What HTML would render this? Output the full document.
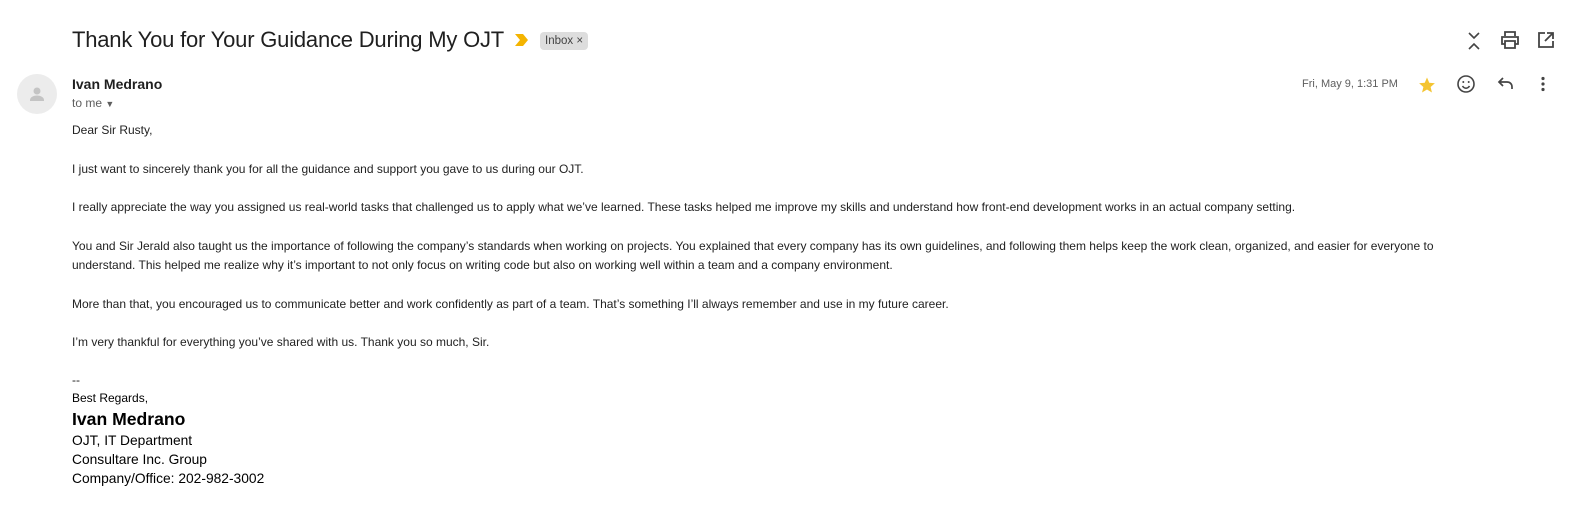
<!DOCTYPE html>
<html><head><meta charset="utf-8"><style>
body{margin:0;width:1590px;height:506px;background:#fff;font-family:"Liberation Sans",Arial,sans-serif;color:#222;position:relative;overflow:hidden}
.a{position:absolute;white-space:nowrap}
.title{left:72px;top:27px;font-size:22px;color:#1f1f1f;letter-spacing:-0.2px}
.inbox{left:540px;top:32px;background:#ddd;border-radius:4px;font-size:11.5px;color:#444;padding:1px 5px;height:16px;line-height:16px}
.p{left:72px;font-size:12px;color:#222}
.sig{left:72px;font-size:13.8px;color:#000}
svg{position:absolute}
</style></head><body>
<div class="a title">Thank You for Your Guidance During My OJT</div>
<svg style="left:515px;top:34px" width="14" height="12" viewBox="0 0 14 12"><path d="M0 0h8l5 6-5 6H0l5-6z" fill="#f4b400"/></svg>
<div class="a inbox">Inbox ×</div>
<svg style="left:1465px;top:30px" width="18" height="22" viewBox="0 0 18 22" fill="none" stroke="#444" stroke-width="1.6"><path d="M4 3l5 5 5-5M4 19l5-5 5 5"/></svg>
<svg style="left:1500px;top:31px" width="20" height="18" viewBox="0 0 20 18" fill="none" stroke="#444" stroke-width="1.8"><path d="M5 5V1h10v4M5 13H2V6h16v7h-3M5 10h10v7H5z"/></svg>
<svg style="left:1537px;top:31px" width="18" height="18" viewBox="0 0 18 18" fill="none" stroke="#444" stroke-width="1.8"><path d="M8 2H2v14h14v-6M10 2h6v6M16 2L8 10"/></svg>
<div class="a" style="left:17px;top:74px;width:40px;height:40px;border-radius:50%;background:#ececec"></div>
<svg style="left:27px;top:84px" width="20" height="20" viewBox="0 0 20 20" fill="#c4c4c4"><circle cx="10" cy="7" r="3.5"/><path d="M3 16c0-3 4-4.5 7-4.5s7 1.5 7 4.5v1H3z"/></svg>
<div class="a" style="left:72px;top:76px;font-size:14px;font-weight:bold;color:#1f1f1f">Ivan Medrano</div>
<div class="a" style="left:72px;top:96px;font-size:12px;color:#5e5e5e">to me <span style="font-size:9px">▼</span></div>
<div class="a" style="left:1302px;top:78px;font-size:11px;color:#5e5e5e">Fri, May 9, 1:31 PM</div>
<svg style="left:1418px;top:76px" width="18" height="18" viewBox="0 0 24 24"><path d="M12 2l3 7 7.5.6-5.7 5 1.8 7.4L12 18l-6.6 4 1.8-7.4-5.7-5L9 9z" fill="#f4c430"/></svg>
<svg style="left:1456px;top:74px" width="20" height="20" viewBox="0 0 20 20" fill="none" stroke="#444" stroke-width="1.6"><circle cx="10" cy="10" r="8"/><circle cx="7.3" cy="8" r="1" fill="#444" stroke="none"/><circle cx="12.7" cy="8" r="1" fill="#444" stroke="none"/><path d="M6.5 12c1 1.6 2.2 2.2 3.5 2.2s2.5-.6 3.5-2.2"/></svg>
<svg style="left:1497px;top:76px" width="18" height="16" viewBox="0 0 18 16" fill="none" stroke="#444" stroke-width="1.7"><path d="M6 2L2 6l4 4M2 6h8c3 0 5 2 5 5v2"/></svg>
<svg style="left:1540px;top:76px" width="6" height="16" viewBox="0 0 6 16" fill="#444"><circle cx="3" cy="2.5" r="1.6"/><circle cx="3" cy="8" r="1.6"/><circle cx="3" cy="13.5" r="1.6"/></svg>
<div class="a p" style="top:123px">Dear Sir Rusty,</div>
<div class="a p" style="top:162px">I just want to sincerely thank you for all the guidance and support you gave to us during our OJT.</div>
<div class="a p" style="top:200px">I really appreciate the way you assigned us real-world tasks that challenged us to apply what we’ve learned. These tasks helped me improve my skills and understand how front-end development works in an actual company setting.</div>
<div class="a p" style="top:239px">You and Sir Jerald also taught us the importance of following the company’s standards when working on projects. You explained that every company has its own guidelines, and following them helps keep the work clean, organized, and easier for everyone to</div>
<div class="a p" style="top:258px">understand. This helped me realize why it’s important to not only focus on writing code but also on working well within a team and a company environment.</div>
<div class="a p" style="top:297px">More than that, you encouraged us to communicate better and work confidently as part of a team. That’s something I’ll always remember and use in my future career.</div>
<div class="a p" style="top:335px">I’m very thankful for everything you’ve shared with us. Thank you so much, Sir.</div>
<div class="a p" style="top:373px">--</div>
<div class="a p" style="top:391px;color:#000">Best Regards,</div>
<div class="a sig" style="top:409px;font-size:17.6px;font-weight:bold">Ivan Medrano</div>
<div class="a sig" style="top:433px">OJT, IT Department</div>
<div class="a sig" style="top:452px">Consultare Inc. Group</div>
<div class="a sig" style="top:471px">Company/Office: 202-982-3002</div>
</body></html>
